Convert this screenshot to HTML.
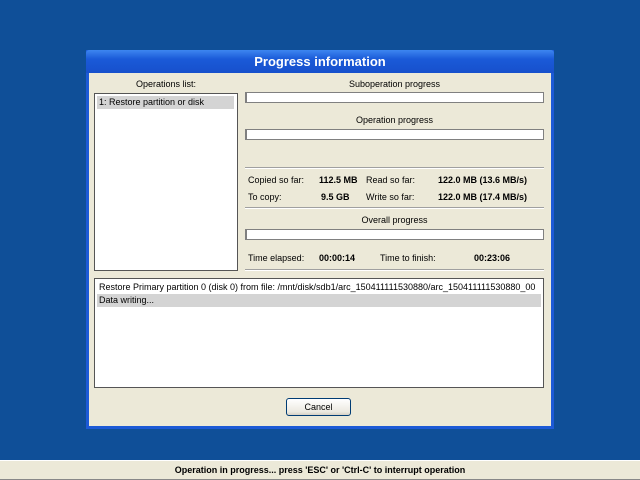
<!DOCTYPE html><html><head><style>
*{margin:0;padding:0;box-sizing:border-box}
body{width:640px;height:480px;background:#0f4f98;position:relative;overflow:hidden;font-family:"Liberation Sans",sans-serif;font-size:9px;color:#000}
.a{position:absolute}
.win{left:86px;top:50px;width:468px;height:379px;background:#ece9d8;border:3px solid #1c5ad6;border-top:0}
.title{left:86px;top:50px;width:468px;height:23px;background:linear-gradient(#3d86f0,#1a5ad8 40%,#1750cc);color:#fff;font-size:13px;font-weight:bold;text-align:center;line-height:23px;border-radius:3px 3px 0 0}
.box{background:#fff;border:1px solid #7f9db9}
.bar{background:#fff;border:1px solid #808080;border-left:2px solid #808080;height:11px}
.sep{height:2px;border-top:1px solid #a0a0a0;border-bottom:1px solid #fff}
.c{text-align:center}
b{font-weight:bold}
</style></head><body>
<div class="a win"></div>
<div class="a title">Progress information</div>
<div class="a c" style="left:94px;top:79px;width:144px">Operations list:</div>
<div class="a box" style="left:94px;top:93px;width:144px;height:178px;border-color:#555"></div>
<div class="a" style="left:97px;top:96px;width:137px;height:13px;background:#d4d4d4;padding-left:2px;line-height:13px">1: Restore partition or disk</div>
<div class="a c" style="left:245px;top:79px;width:299px">Suboperation progress</div>
<div class="a bar" style="left:245px;top:92px;width:299px"></div>
<div class="a c" style="left:245px;top:115px;width:299px">Operation progress</div>
<div class="a bar" style="left:245px;top:129px;width:299px"></div>
<div class="a sep" style="left:245px;top:167px;width:299px"></div>
<div class="a" style="left:248px;top:175px">Copied so far:</div>
<div class="a" style="left:319px;top:175px"><b>112.5 MB</b></div>
<div class="a" style="left:366px;top:175px">Read so far:</div>
<div class="a" style="left:438px;top:175px"><b>122.0 MB (13.6 MB/s)</b></div>
<div class="a" style="left:248px;top:192px">To copy:</div>
<div class="a" style="left:321px;top:192px"><b>9.5 GB</b></div>
<div class="a" style="left:366px;top:192px">Write so far:</div>
<div class="a" style="left:438px;top:192px"><b>122.0 MB (17.4 MB/s)</b></div>
<div class="a sep" style="left:245px;top:207px;width:299px"></div>
<div class="a c" style="left:245px;top:215px;width:299px">Overall progress</div>
<div class="a bar" style="left:245px;top:229px;width:299px"></div>
<div class="a" style="left:248px;top:253px">Time elapsed:</div>
<div class="a" style="left:319px;top:253px"><b>00:00:14</b></div>
<div class="a" style="left:380px;top:253px">Time to finish:</div>
<div class="a" style="left:474px;top:253px"><b>00:23:06</b></div>
<div class="a sep" style="left:245px;top:269px;width:299px"></div>
<div class="a box" style="left:94px;top:278px;width:450px;height:110px;border-color:#555;overflow:hidden">
<div style="padding:3px 0 0 4px;white-space:nowrap;height:15px">Restore Primary partition 0 (disk 0) from file: /mnt/disk/sdb1/arc_150411111530880/arc_150411111530880_00</div>
<div style="margin:0 2px;background:#d4d4d4;height:13px;line-height:13px;padding-left:2px">Data writing...</div>
</div>
<div class="a c" style="left:286px;top:398px;width:65px;height:18px;border:1px solid #003c74;border-radius:3px;background:linear-gradient(#fff,#ece9e0 80%,#d6d0c5);line-height:16px">Cancel</div>
<div class="a c" style="left:0;top:460px;width:640px;height:20px;background:#ece9d8;border-top:1px solid #fff;border-bottom:1px solid #888;line-height:18px"><b>Operation in progress... press 'ESC' or 'Ctrl-C' to interrupt operation</b></div>
</body></html>
